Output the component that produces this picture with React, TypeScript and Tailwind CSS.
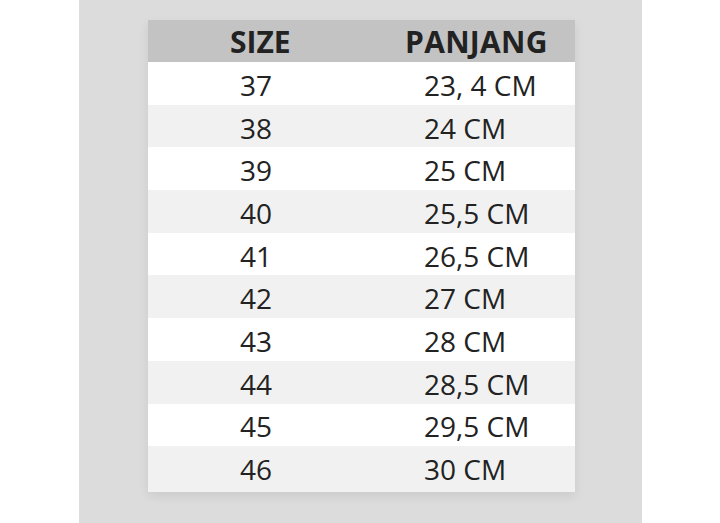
const rows: [string, string][] = [
  ["37", "23, 4 CM"],
  ["38", "24 CM"],
  ["39", "25 CM"],
  ["40", "25,5 CM"],
  ["41", "26,5 CM"],
  ["42", "27 CM"],
  ["43", "28 CM"],
  ["44", "28,5 CM"],
  ["45", "29,5 CM"],
  ["46", "30 CM"],
];

export default function App() {
  return (
    <div
      className="w-[720px] h-[523px] bg-white overflow-hidden"
      style={{ fontFamily: '"Open Sans", "Liberation Sans", sans-serif' }}
    >
      <div className="ml-[79px] w-[563px] h-full bg-[#dcdcdc] pt-[20px] pl-[69px]">
        <div className="w-[427px] shadow-[0_4px_10px_rgba(0,0,0,0.08)] text-[#222] pb-[3px] bg-[#f1f1f1]">
          {/* header */}
          <div className="grid grid-cols-[257px_170px] h-[42px] items-center bg-[#c3c3c3] text-[30px] leading-none font-bold pt-[2px]">
            <div className="pl-[82px]">SIZE</div>
            <div className="tracking-[0.3px]">PANJANG</div>
          </div>
          {rows.map(([size, len], i) => (
            <div
              key={size}
              className={`grid grid-cols-[276px_151px] h-[42.7px] items-center text-[28px] leading-none pt-[3px] ${
                i % 2 === 0 ? "bg-white" : "bg-[#f1f1f1]"
              }`}
            >
              <div className="pl-[92px]">{size}</div>
              <div>{len}</div>
            </div>
          ))}
        </div>
      </div>
    </div>
  );
}
